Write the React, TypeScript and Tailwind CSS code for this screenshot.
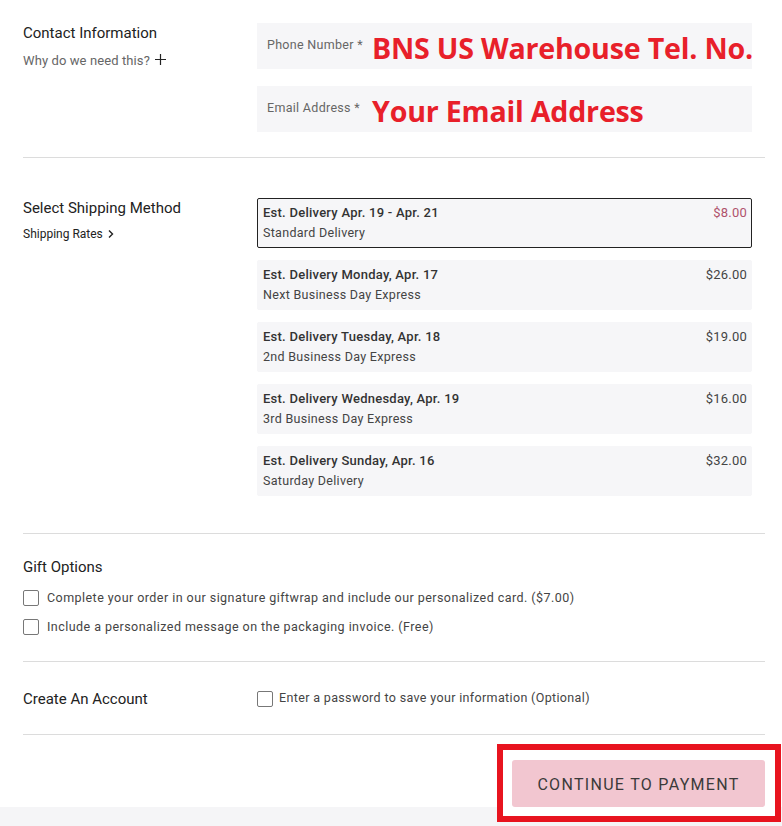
import React from "react";

const options = [
  { date: "Est. Delivery Apr. 19 - Apr. 21", name: "Standard Delivery", price: "$8.00", selected: true },
  { date: "Est. Delivery Monday, Apr. 17", name: "Next Business Day Express", price: "$26.00" },
  { date: "Est. Delivery Tuesday, Apr. 18", name: "2nd Business Day Express", price: "$19.00" },
  { date: "Est. Delivery Wednesday, Apr. 19", name: "3rd Business Day Express", price: "$16.00" },
  { date: "Est. Delivery Sunday, Apr. 16", name: "Saturday Delivery", price: "$32.00" },
];

function Box() {
  return <span className="block w-4 h-4 shrink-0 border border-[#777] rounded-[2px] bg-white" />;
}

function Field({ label, value }: { label: string; value: string }) {
  return (
    <div className="h-[46px] bg-[#f6f6f8] flex items-center pl-[10px]">
      <span className="text-[12.5px] text-[#666] tracking-[0.3px] w-[105px] shrink-0 pb-[1px]">{label}</span>
      <span className="font-['Open_Sans'] font-bold text-[28.6px] leading-none text-[#e8202a] tracking-[-0.2px] whitespace-nowrap pt-[5px]">
        {value}
      </span>
    </div>
  );
}

export default function App() {
  return (
    <div className="w-[782px] min-h-[826px] bg-white font-['Roboto',sans-serif] text-[#222] flex flex-col">
      <div className="pl-[23px] w-[765px]">
        {/* contact */}
        <div className="flex pt-[23px] pb-[25px] border-b border-[#dcdcdc]">
          <div className="w-[234px] pt-[1px]">
            <h2 className="text-[15px] leading-[18px]">Contact Information</h2>
            <div className="mt-[9px] flex items-center text-[13px] text-[#666] tracking-[0.1px]">
              Why do we need this?
              <svg width="13" height="13" viewBox="0 0 13 13" className="ml-[4px] -mt-[2px]">
                <path d="M6.5 1v11M1 6.5h11" stroke="#222" strokeWidth="1.2" />
              </svg>
            </div>
          </div>
          <div className="w-[495px] flex flex-col gap-[17px]">
            <Field label="Phone Number *" value="BNS US Warehouse Tel. No." />
            <Field label="Email Address *" value="Your Email Address" />
          </div>
        </div>

        {/* shipping */}
        <div className="flex pt-[40px] pb-[37px] border-b border-[#dcdcdc]">
          <div className="w-[234px] pt-[1px]">
            <h2 className="text-[15px] leading-[18px]">Select Shipping Method</h2>
            <div className="mt-[8px] flex items-center text-[12px] text-[#222]">
              Shipping Rates
              <svg width="8" height="10" viewBox="0 0 8 10" className="ml-[4px]">
                <path d="M2 1.5L5.5 5L2 8.5" stroke="#222" strokeWidth="1.4" fill="none" />
              </svg>
            </div>
          </div>
          <div className="w-[495px] flex flex-col gap-[12px]">
            {options.map((o) => (
              <div
                key={o.date}
                className={
                  "h-[50px] bg-[#f6f6f8] flex justify-between pl-[5px] pr-[4px] pt-[6px] rounded-[2px] " +
                  (o.selected ? "border border-[#222]" : "border border-[#f6f6f8]")
                }
              >
                <div>
                  <div className="text-[13px] leading-[16px] font-medium text-[#333] tracking-[0.25px]">{o.date}</div>
                  <div className="mt-[4px] text-[12.5px] leading-[16px] text-[#444] tracking-[0.3px]">{o.name}</div>
                </div>
                <div className={"text-[13px] leading-[16px] tracking-[0.2px] " + (o.selected ? "text-[#b0526c]" : "text-[#444]")}>
                  {o.price}
                </div>
              </div>
            ))}
          </div>
        </div>

        {/* gift */}
        <div className="pt-[24px] pb-[24px] border-b border-[#dcdcdc]">
          <h2 className="text-[15px] leading-[18px]">Gift Options</h2>
          <div className="mt-[13px] flex flex-col gap-[10px] text-[12.5px] text-[#444] tracking-[0.45px]">
            <label className="flex items-center gap-[8px]">
              <Box />
              Complete your order in our signature giftwrap and include our personalized card. ($7.00)
            </label>
            <label className="flex items-center gap-[8px]">
              <Box />
              Include a personalized message on the packaging invoice. (Free)
            </label>
          </div>
        </div>

        {/* account */}
        <div className="flex items-center h-[73px] border-b border-[#dcdcdc]">
          <h2 className="w-[234px] text-[15px] leading-[18px] pt-[3px]">Create An Account</h2>
          <label className="flex items-center gap-[6px] text-[12.5px] text-[#444] tracking-[0.35px] pt-[2px]">
            <Box />
            Enter a password to save your information (Optional)
          </label>
        </div>

        {/* button */}
        <div className="flex justify-end pt-[25px]">
          <div className="relative">
            <div className="absolute left-[-15px] right-[-16px] top-[-16px] bottom-[-15px] border-[6px] border-[#e8141f] bg-white" />
            <button className="relative w-[253px] h-[47px] bg-[#f2c6d0] rounded-[3px] text-[16px] tracking-[1.3px] text-[#3a3a3a] pt-[3px]">
              CONTINUE TO PAYMENT
            </button>
          </div>
        </div>
      </div>
      <div className="h-[20px] bg-[#f5f5f7] flex-1" />
    </div>
  );
}
